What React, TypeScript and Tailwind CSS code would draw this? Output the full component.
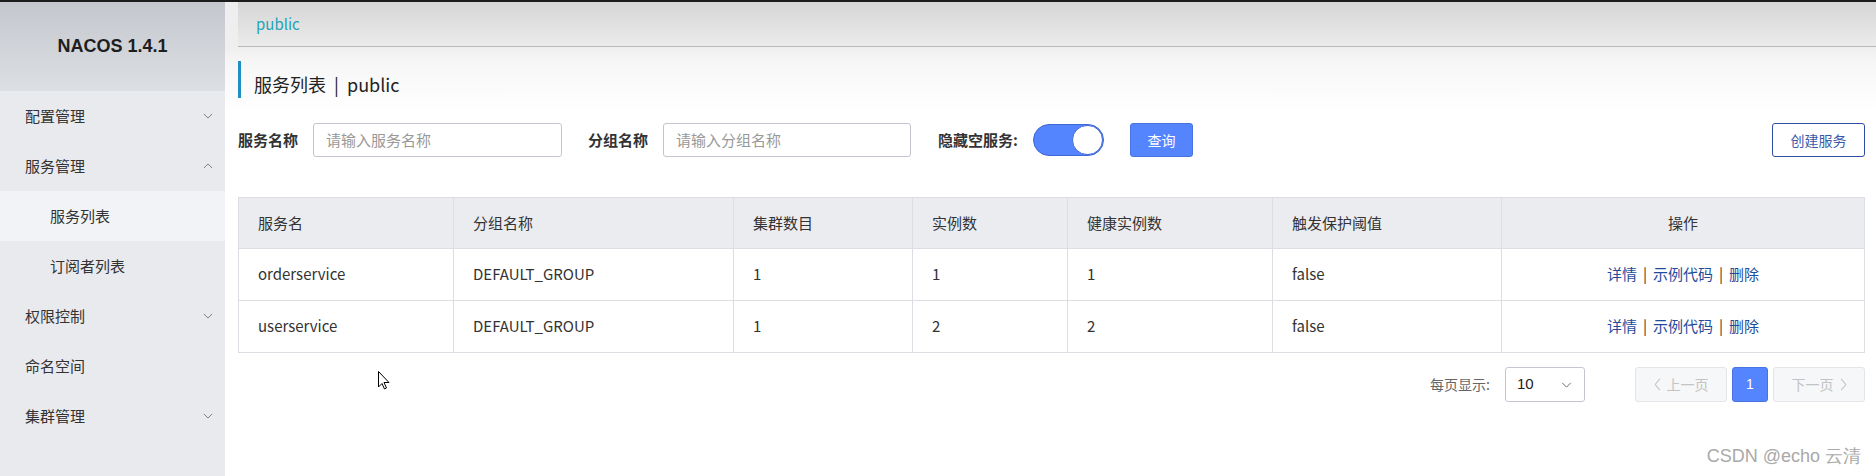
import React from 'react'

const menu = [
  { label: '配置管理', chevron: 'down' },
  { label: '服务管理', chevron: 'up' },
  { label: '服务列表', sub: true, active: true },
  { label: '订阅者列表', sub: true },
  { label: '权限控制', chevron: 'down' },
  { label: '命名空间' },
  { label: '集群管理', chevron: 'down' },
]

const columns = ['服务名', '分组名称', '集群数目', '实例数', '健康实例数', '触发保护阈值', '操作']

const rows = [
  ['orderservice', 'DEFAULT_GROUP', '1', '1', '1', 'false'],
  ['userservice', 'DEFAULT_GROUP', '1', '2', '2', 'false'],
]

const gridCols = 'grid grid-cols-[215px_280px_179px_155px_205px_229px_1fr]'

function Chevron({ dir, className }: { dir: 'up' | 'down' | 'left' | 'right'; className?: string }) {
  const d = {
    down: 'M1 1 L6 6 L11 1',
    up: 'M1 6 L6 1 L11 6',
    left: 'M6 1 L1 7 L6 13',
    right: 'M1 1 L6 7 L1 13',
  }[dir]
  const vb = dir === 'up' || dir === 'down' ? '0 0 12 7' : '0 0 7 14'
  return (
    <svg viewBox={vb} className={className} fill="none" stroke="currentColor" strokeWidth="1.1">
      <path d={d} />
    </svg>
  )
}

function Sidebar() {
  return (
    <aside className="w-[225px] shrink-0 bg-[#e9eaee] flex flex-col">
      <div className="h-[89px] bg-gradient-to-b from-[#c4c8ce] to-[#dcdfe3] flex items-center justify-center">
        <span className="font-['Liberation_Sans',Arial,sans-serif] font-bold text-[18px] text-[#1e1e1e]">NACOS 1.4.1</span>
      </div>
      {menu.map((m) => (
        <div
          key={m.label}
          className={`h-[50px] flex items-center justify-between pr-[12px] text-[15px] text-[#333] ${m.sub ? 'pl-[50px]' : 'pl-[25px]'} ${m.active ? 'bg-[#f2f3f6]' : ''}`}
        >
          <span>{m.label}</span>
          {m.chevron && <Chevron dir={m.chevron as 'up' | 'down'} className="w-[10px] h-[6px] text-[#777]" />}
        </div>
      ))}
    </aside>
  )
}

function FilterBar() {
  return (
    <div className="mt-[25px] h-[34px] flex items-center text-[15px]">
      <span className="w-[75px] font-bold text-[#333]">服务名称</span>
      <div className="w-[249px] h-[34px] border border-[#c4c6cf] rounded-[3px] flex items-center pl-[12px] text-[#999]">
        请输入服务名称
      </div>
      <span className="ml-[26px] w-[75px] font-bold text-[#333]">分组名称</span>
      <div className="w-[248px] h-[34px] border border-[#c4c6cf] rounded-[3px] flex items-center pl-[12px] text-[#999]">
        请输入分组名称
      </div>
      <span className="ml-[27px] w-[95px] font-bold text-[#333]">隐藏空服务:</span>
      <div className="w-[71px] h-[32px] rounded-full bg-[#5584ff] border border-[#4169d6] flex justify-end">
        <div className="w-[31px] h-[30px] rounded-full bg-white border border-[#4169d6]" />
      </div>
      <button className="ml-[26px] w-[63px] h-[34px] rounded-[3px] bg-[#5584ff] border border-[#4a73e0] text-white text-[14px]">
        查询
      </button>
      <button className="ml-auto w-[93px] h-[34px] rounded-[3px] bg-white border border-[#2e4f9f] text-[#3a58aa] text-[14px]">
        创建服务
      </button>
    </div>
  )
}

function ServiceTable() {
  return (
    <div className="mt-[40px] border-x border-t border-[#dcdee3] text-[15px] text-[#333]">
      <div className={`${gridCols} h-[51px] bg-[#ebecf0] border-b border-[#dcdee3]`}>
        {columns.map((c, i) => (
          <div
            key={c}
            className={`flex items-center ${i === columns.length - 1 ? 'justify-center' : 'pl-[19px] border-r border-[#dcdee3]'}`}
          >
            {c}
          </div>
        ))}
      </div>
      {rows.map((r) => (
        <div key={r[0]} className={`${gridCols} h-[52px] border-b border-[#dcdee3]`}>
          {r.map((v, i) => (
            <div key={i} className="flex items-center pl-[19px] border-r border-[#dcdee3]">
              {v}
            </div>
          ))}
          <div className="flex items-center justify-center gap-[6px] text-[#1f4c9c]">
            <span>详情</span>
            <span className="text-[#333]">|</span>
            <span>示例代码</span>
            <span className="text-[#333]">|</span>
            <span>删除</span>
          </div>
        </div>
      ))}
    </div>
  )
}

function Pagination() {
  return (
    <div className="mt-[14px] h-[35px] flex items-center justify-end text-[14px]">
      <span className="text-[#666] mr-[15px]">每页显示:</span>
      <div className="w-[80px] h-[35px] border border-[#c4c6cf] rounded-[3px] flex items-center justify-between pl-[11px] pr-[12px] font-['Liberation_Sans',Arial,sans-serif] text-[15px] text-[#222]">
        <span>10</span>
        <Chevron dir="down" className="w-[11px] h-[6px] text-[#666]" />
      </div>
      <div className="ml-[50px] w-[92px] h-[35px] rounded-[3px] bg-[#f6f7f9] border border-[#e4e5e8] flex items-center justify-center gap-[6px] text-[#c3c3c3]">
        <Chevron dir="left" className="w-[7px] h-[13px]" />
        <span>上一页</span>
      </div>
      <div className="ml-[5px] w-[36px] h-[35px] rounded-[3px] bg-[#5584ff] border border-[#4a73e0] flex items-center justify-center text-white font-['Liberation_Sans',Arial,sans-serif]">
        1
      </div>
      <div className="ml-[5px] w-[92px] h-[35px] rounded-[3px] bg-[#f6f7f9] border border-[#e4e5e8] flex items-center justify-center gap-[6px] text-[#c3c3c3]">
        <span>下一页</span>
        <Chevron dir="right" className="w-[7px] h-[13px]" />
      </div>
    </div>
  )
}

export default function App() {
  return (
    <div className="w-[1876px] h-[476px] overflow-hidden border-t-2 border-[#1c1c1c] flex font-['Noto_Sans_CJK_SC',sans-serif] bg-white">
      <Sidebar />
      <main className="flex-1 relative bg-[linear-gradient(to_bottom,#eeeeee_0px,#efefef_45px,#f6f6f6_60px,#ffffff_110px)]">
        <div className="ml-[13px] h-[45px] bg-gradient-to-b from-[#d6d6d6] to-[#ebebeb] border-b border-[#b8b8b8] flex items-center pl-[18px] text-[15px] text-[#24a3b6]">
          public
        </div>
        <div className="pl-[13px] pr-[11px]">
          <div className="mt-[14px] h-[37px] border-l-[3px] border-[#1f8fc4] pl-[13px] pt-[11px]">
            <span className="text-[18px] leading-[25px] text-[#222]">服务列表 &nbsp;|&nbsp; public</span>
          </div>
          <FilterBar />
          <ServiceTable />
          <Pagination />
        </div>
        <svg
          viewBox="0 0 12 19"
          className="absolute left-[153px] top-[369px] w-[12px] h-[19px]"
          fill="white"
          stroke="black"
          strokeWidth="1"
        >
          <path d="M0.5 0.5 L0.5 16 L4 12.5 L6.5 18 L8.5 17 L6 11.5 L11 11.5 Z" />
        </svg>
        <span className="absolute right-[15px] bottom-[6px] font-['Liberation_Sans',Arial,sans-serif] text-[18px] text-[#a9a9a9]">
          CSDN @echo 云清
        </span>
      </main>
    </div>
  )
}
